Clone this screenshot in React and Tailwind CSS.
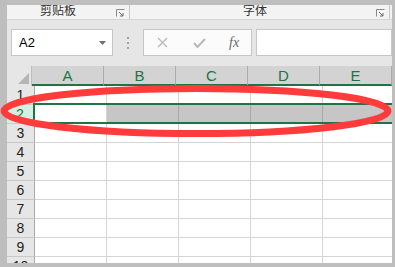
import React from 'react';

const cols = ['A', 'B', 'C', 'D', 'E'];
const rows = [1, 2, 3, 4, 5, 6, 7, 8, 9, 10];

const Launcher = () => (
  <svg width="9" height="8" viewBox="0 0 9 8" className="shrink-0">
    <path d="M0.5 7.5V0.5H8.5" stroke="#8a8a8a" fill="none" />
    <path d="M3 3L7 7M7 4V7H4" stroke="#6a6a6a" fill="none" />
  </svg>
);

const RibbonLabels = () => (
  <div className="flex h-[15px] bg-[#f3f3f3] border-b border-[#d5d5d5] text-[12px] leading-[12px] text-[#333] font-['Noto_Sans_CJK_SC',sans-serif]">
    <div className="w-[123px] flex items-start pl-[33px] pr-[4px] border-r border-[#c8c8c8]">
      <span className="-mt-[1px]">剪贴板</span>
      <div className="ml-auto mt-[4px]"><Launcher /></div>
    </div>
    <div className="w-[260px] flex items-start pl-[113px] pr-[4px] border-r border-[#c8c8c8]">
      <span className="-mt-[1px]">字体</span>
      <div className="ml-auto mt-[4px]"><Launcher /></div>
    </div>
  </div>
);

const FormulaBar = () => (
  <div className="flex items-start h-[46px] bg-[#e6e6e6] pt-[9px] pl-[4px]">
    <div className="w-[102px] h-[27px] bg-white border border-[#c6c6c6] flex items-center pl-[7px] pr-[6px]">
      <span className="text-[13px] text-black font-['Liberation_Sans',sans-serif]">A2</span>
      <svg width="7" height="4" viewBox="0 0 7 4" className="ml-auto">
        <path d="M0 0H7L3.5 4Z" fill="#6f6f6f" />
      </svg>
    </div>
    <div className="ml-[14px] mt-[8px] flex flex-col gap-[3px]">
      <div className="w-[2px] h-[2px] bg-[#a0a0a0]" />
      <div className="w-[2px] h-[2px] bg-[#a0a0a0]" />
      <div className="w-[2px] h-[2px] bg-[#a0a0a0]" />
    </div>
    <div className="ml-[14px] w-[109px] h-[27px] bg-[#fbfbfb] border border-[#c6c6c6] flex items-center">
      <svg width="11" height="11" viewBox="0 0 11 11" className="ml-[13px]">
        <path d="M1 1L10 10M10 1L1 10" stroke="#b8b8b8" strokeWidth="1.3" />
      </svg>
      <svg width="13" height="10" viewBox="0 0 13 10" className="ml-[25px]">
        <path d="M1 5L4.5 9L12 1" stroke="#b8b8b8" strokeWidth="2" fill="none" />
      </svg>
      <span className="ml-[23px] text-[14px] italic text-[#6a6a6a] font-['Liberation_Serif',serif]">fx</span>
    </div>
    <div className="ml-[4px] flex-1 h-[27px] bg-white border border-[#c6c6c6]" />
  </div>
);

const HeaderRow = () => (
  <div className="flex h-[20px] shrink-0">
    <div className="w-[28px] bg-[#e6e6e6] border-r border-[#bdbdbd] flex items-end justify-end pr-[2px] pb-[2px]">
      <svg width="11" height="11" viewBox="0 0 11 11">
        <path d="M11 0V11H0Z" fill="#b5b5b5" />
      </svg>
    </div>
    {cols.map((c) => (
      <div
        key={c}
        className="w-[72px] shrink-0 bg-[#d3d3d3] border-r border-[#ababab] border-b-2 border-b-[#217346] flex items-end justify-center text-[15px] leading-[17px] text-[#217346] font-['Liberation_Sans',sans-serif]"
      >
        {c}
      </div>
    ))}
  </div>
);

const Row = ({ n }) => {
  const sel = n === 2;
  return (
    <div className="flex h-[19px] shrink-0 relative">
      <div
        className={
          sel
            ? 'w-[28px] shrink-0 bg-[#d3f0e0] border-b border-[#c8c8c8] border-r-2 border-r-[#217346] flex items-center justify-center text-[14px] text-[#217346] font-["Liberation_Sans",sans-serif]'
            : 'w-[28px] shrink-0 bg-[#e6e6e6] border-b border-[#c8c8c8] border-r border-r-[#ababab] flex items-center justify-center text-[14px] text-[#222] font-["Liberation_Sans",sans-serif]'
        }
      >
        {n}
      </div>
      {cols.map((c, i) => (
        <div
          key={c}
          className={
            sel && i > 0
              ? 'w-[72px] shrink-0 bg-[#c6c6c6] border-r border-[#a8a8a8]'
              : 'w-[72px] shrink-0 bg-white border-r border-b border-[#d4d4d4]'
          }
        />
      ))}
      {sel && (
        <div className="absolute left-[26px] -top-[2px] w-[400px] h-[21px] border-2 border-[#217346]" />
      )}
    </div>
  );
};

export default function App() {
  return (
    <div className="relative w-[395px] h-[267px] bg-[#bebebe] pl-[7px] pt-[5px] overflow-hidden">
      <div className="w-[385px] h-[258px] bg-white flex flex-col overflow-hidden">
        <RibbonLabels />
        <FormulaBar />
        <div className="flex-1 flex flex-col overflow-hidden">
          <HeaderRow />
          {rows.map((n) => (
            <Row key={n} n={n} />
          ))}
        </div>
      </div>
      <svg className="absolute left-0 top-0 pointer-events-none" width="395" height="267">
        <ellipse cx="196" cy="111" rx="192" ry="22.5" fill="none" stroke="#ff3b3b" strokeWidth="7" />
      </svg>
    </div>
  );
}
